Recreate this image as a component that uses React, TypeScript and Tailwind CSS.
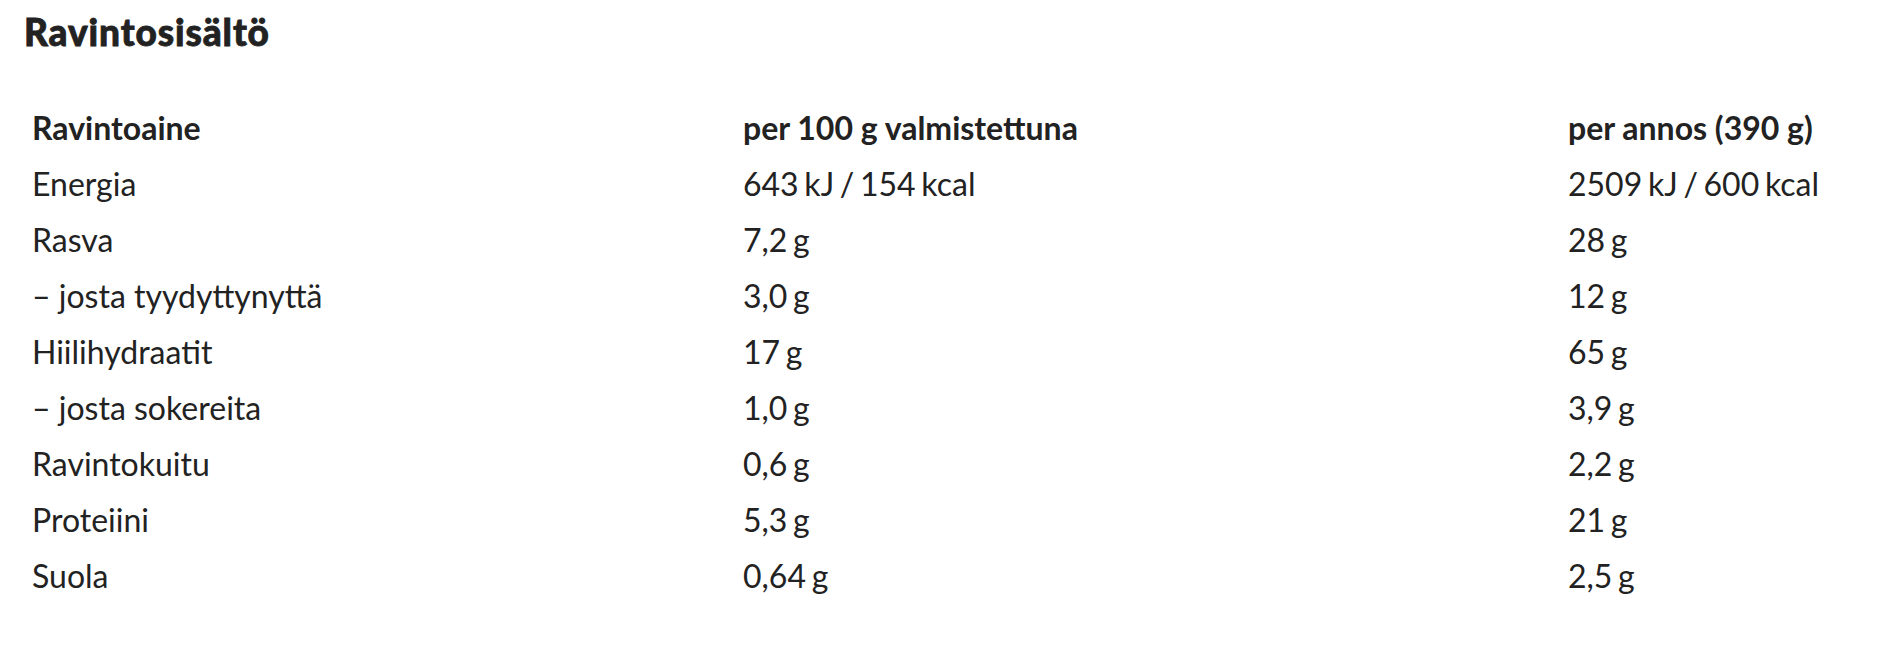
const rows: [string, string, string][] = [
  ['Energia', '643 kJ / 154 kcal', '2509 kJ / 600 kcal'],
  ['Rasva', '7,2 g', '28 g'],
  ['– josta tyydyttynyttä', '3,0 g', '12 g'],
  ['Hiilihydraatit', '17 g', '65 g'],
  ['– josta sokereita', '1,0 g', '3,9 g'],
  ['Ravintokuitu', '0,6 g', '2,2 g'],
  ['Proteiini', '5,3 g', '21 g'],
  ['Suola', '0,64 g', '2,5 g'],
]

// Nutrition facts table: heading plus a three-column grid.
export default function App() {
  return (
    <div className="min-h-[646px] bg-white px-6 pt-[14px] text-[#222] font-['Lato','Liberation_Sans',sans-serif]">
      <h2 className="text-[37px] font-black leading-[36px] tracking-[0.9px] [-webkit-text-stroke:0.8px_#222]">
        Ravintosisältö
      </h2>
      <div className="mt-[50px] grid grid-cols-[711px_825px_1fr] text-[32px] leading-[56px]">
        <div className="px-2 font-bold">Ravintoaine</div>
        <div className="px-2 font-bold">per 100 g valmistettuna</div>
        <div className="px-2 font-bold">per annos (390 g)</div>
        {rows.map(([name, per100, perServing]) => (
          <div key={name} className="contents">
            <div className="px-2">{name}</div>
            <div className="px-2 [word-spacing:-2.5px]">{per100}</div>
            <div className="px-2 [word-spacing:-2.5px]">{perServing}</div>
          </div>
        ))}
      </div>
    </div>
  )
}
